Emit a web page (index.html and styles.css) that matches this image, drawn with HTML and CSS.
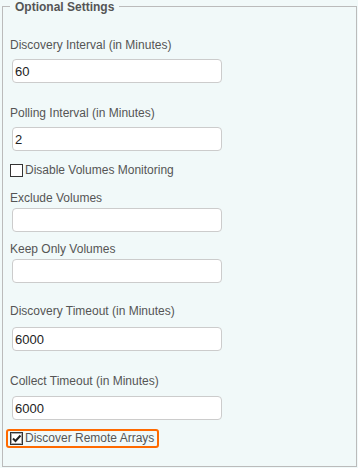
FILE: index.html
```html
<!DOCTYPE html>
<html lang="en">
<head>
    <meta charset="UTF-8">
    <meta name="viewport" content="width=device-width, initial-scale=1.0">
    <title>Optional Settings</title>
    <link rel="stylesheet" href="styles.css">
</head>
<body>
    <fieldset class="settings">
        <legend>Optional Settings</legend>

        <div class="field field-first">
            <label class="field-label" for="discoveryInterval">Discovery Interval (in Minutes)</label>
            <input class="field-input" id="discoveryInterval" type="text" value="60">
        </div>

        <div class="field field-wide">
            <label class="field-label" for="pollingInterval">Polling Interval (in Minutes)</label>
            <input class="field-input" id="pollingInterval" type="text" value="2">
        </div>

        <label class="check check-volumes">
            <span class="check-box"></span>
            <span class="check-text">Disable Volumes Monitoring</span>
        </label>

        <div class="field field-tight field-exclude">
            <label class="field-label" for="excludeVolumes">Exclude Volumes</label>
            <input class="field-input" id="excludeVolumes" type="text" value="">
        </div>

        <div class="field field-tight field-keep">
            <label class="field-label" for="keepVolumes">Keep Only Volumes</label>
            <input class="field-input" id="keepVolumes" type="text" value="">
        </div>

        <div class="field field-wide field-timeout">
            <label class="field-label" for="discoveryTimeout">Discovery Timeout (in Minutes)</label>
            <input class="field-input" id="discoveryTimeout" type="text" value="6000">
        </div>

        <div class="field field-wide field-collect">
            <label class="field-label" for="collectTimeout">Collect Timeout (in Minutes)</label>
            <input class="field-input" id="collectTimeout" type="text" value="6000">
        </div>

        <label class="check check-focus">
            <span class="check-box check-box-on">
                <svg width="13" height="13" viewBox="0 0 13 13">
                    <rect x="0.5" y="0.5" width="12" height="12" fill="#ffffff" stroke="#333333"/>
                    <rect x="1.5" y="1.5" width="10" height="10" fill="none" stroke="#555555" stroke-dasharray="1 1"/>
                    <path d="M3 6.5 L5.5 9 L10.5 3.5" fill="none" stroke="#222222" stroke-width="2"/>
                </svg>
            </span>
            <span class="check-text">Discover Remote Arrays</span>
        </label>
    </fieldset>
</body>
</html>
```

FILE: styles.css
```css
:root {
    --page-bg: #f1f9f9;
    --frame-border: #bbbbbb;
    --label-color: #555555;
    --input-border: #cccccc;
    --focus-ring: #ff6a00;
}

body {
    margin: 0;
    background: var(--page-bg);
    font-family: "Liberation Sans", Arial, sans-serif;
    font-size: 12px;
    color: var(--label-color);
}

.settings {
    margin: 0 1px 1px 2px;
    padding: 26px 7px 18px 7px;
    border: 1px solid var(--frame-border);
    background: var(--page-bg);
    min-width: 0;
}

.settings legend {
    padding: 3px 5px 0;
    line-height: 9px;
    font-weight: bold;
    font-size: 12px;
    color: var(--label-color);
}

.field-label {
    display: block;
    line-height: 14px;
    margin-bottom: 7px;
}

.field-input {
    display: block;
    box-sizing: border-box;
    width: 210px;
    height: 24px;
    margin: 0 0 0 2px;
    padding: 0 2px;
    border: 1px solid var(--input-border);
    border-radius: 4px;
    background: #ffffff;
    font-family: "Liberation Sans", Arial, sans-serif;
    font-size: 13px;
    color: #222222;
    outline: none;
}

.field-wide {
    margin-top: 23px;
}

.field-tight .field-label {
    margin-bottom: 3px;
}

.field-exclude {
    margin-top: 14px;
}

.field-keep {
    margin-top: 10px;
}

.field-timeout {
    margin-top: 21px;
}

.field-timeout .field-label {
    margin-bottom: 9px;
}

.field-collect .field-label {
    margin-bottom: 8px;
}

.check {
    display: flex;
    align-items: center;
    width: fit-content;
    height: 13px;
    line-height: 13px;
    color: var(--label-color);
}

.check-volumes {
    margin-top: 13px;
}

.check-box {
    box-sizing: border-box;
    width: 13px;
    height: 13px;
    margin-right: 2px;
    border: 1px solid #333333;
    background: #ffffff;
}

.check-box-on {
    border: none;
    background: none;
}

.check-box-on svg {
    display: block;
}

.check-focus {
    margin: 9px 0 0 -4px;
    padding: 1px 3px 1px 2px;
    border: 2px solid var(--focus-ring);
    border-radius: 3px;
}
```
